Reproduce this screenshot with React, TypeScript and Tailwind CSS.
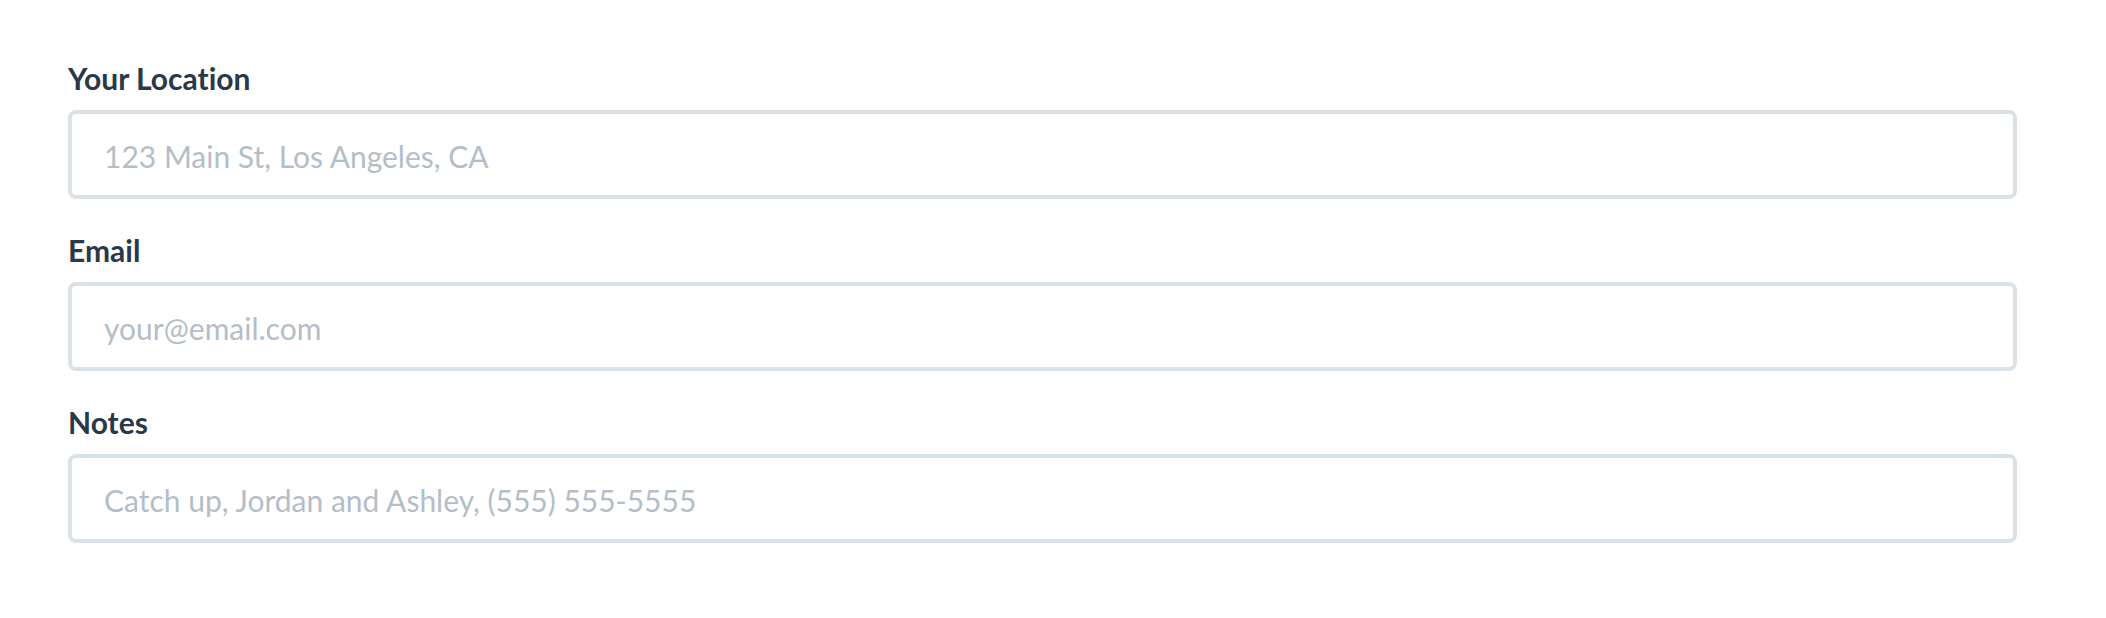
import React from "react";

const fields = [
  { label: "Your Location", placeholder: "123 Main St, Los Angeles, CA", type: "text" },
  { label: "Email", placeholder: "your@email.com", type: "email" },
  { label: "Notes", placeholder: "Catch up, Jordan and Ashley, (555) 555-5555", type: "text" },
];

export default function App() {
  return (
    <div
      className="w-[2106px] h-[618px] bg-white pl-[68px] pr-[89px] pt-[60px] [font-variant-ligatures:none]"
      style={{ fontFamily: "Lato, 'Noto Sans', sans-serif" }}
    >
      <div className="flex flex-col gap-[33px]">
        {fields.map((f) => (
          <div key={f.label} className="flex flex-col">
            <label className="text-[30px] leading-[36px] font-bold text-[#2a3848] mb-[14px]">
              {f.label}
            </label>
            <input
              type={f.type}
              placeholder={f.placeholder}
              className="w-full h-[89px] border-[4px] border-[#dae1e7] rounded-[8px] pl-[32px] pr-[32px] pt-[2px] text-[30px] text-[#2a3848] placeholder:text-[#b4bec8] outline-none [font-variant-ligatures:none]"
              style={{ fontFamily: "Lato, 'Noto Sans', sans-serif" }}
            />
          </div>
        ))}
      </div>
    </div>
  );
}
